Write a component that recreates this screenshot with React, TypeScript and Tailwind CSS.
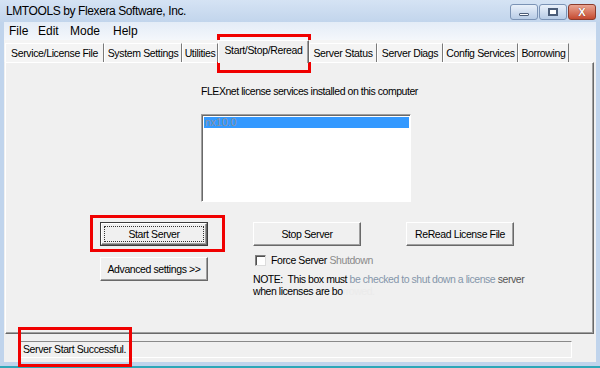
import React from "react";

const TABS = [
  { label: "Service/License File", w: "w-[99px]" },
  { label: "System Settings", w: "w-[78px]" },
  { label: "Utilities", w: "w-[36px]" },
  { label: "Start/Stop/Reread", w: "w-[91px]", active: true },
  { label: "Server Status", w: "w-[68px]" },
  { label: "Server Diags", w: "w-[66px]" },
  { label: "Config Services", w: "w-[75px]" },
  { label: "Borrowing", w: "w-[51px]" },
];

const MENU = [
  { label: "File", w: "w-[29px]" },
  { label: "Edit", w: "w-[32px]" },
  { label: "Mode", w: "w-[43px]" },
  { label: "Help", w: "w-[30px]" },
];

function WinButton({
  label,
  isDefault = false,
  className = "",
}: {
  label: string;
  isDefault?: boolean;
  className?: string;
}) {
  const face = (
    <div className="relative flex h-full w-full items-center justify-center border border-t-white border-l-white border-r-[#696969] border-b-[#696969] bg-[#f0f0f0] shadow-[inset_-1px_-1px_0_#a0a0a0]">
      {isDefault && (
        <div className="absolute inset-[2px] border border-dotted border-[#333]" />
      )}
      <span className="text-[10.5px] leading-[13px] tracking-[-0.4px] text-black">
        {label}
      </span>
    </div>
  );

  if (isDefault) {
    return (
      <div className={`h-[24px] w-[108px] border border-[#3c3c3c] ${className}`}>
        {face}
      </div>
    );
  }
  return <div className={`h-[24px] w-[108px] ${className}`}>{face}</div>;
}

function CaptionButtons() {
  return (
    <div className="mt-[4px] mr-[4px] flex gap-[1px]">
      <div className="flex h-[16px] w-[28px] items-center justify-center rounded-[3px] border border-[#7b93b5] bg-linear-to-b from-[#eaf1fa] to-[#b8cce6]">
        <div className="mt-[4px] h-[3px] w-[10px] rounded-[1px] border border-[#4b5d78] bg-white" />
      </div>
      <div className="flex h-[16px] w-[28px] items-center justify-center rounded-[3px] border border-[#7b93b5] bg-linear-to-b from-[#eaf1fa] to-[#b8cce6]">
        <div className="h-[8px] w-[10px] border-2 border-[#4b5d78] bg-white" />
      </div>
      <div className="flex h-[16px] w-[28px] items-center justify-center rounded-[3px] border border-[#8a3b2c] bg-linear-to-b from-[#e9a593] to-[#c4492f]">
        <span className="text-[11px] leading-none font-bold text-white [text-shadow:0_0_1px_#5a1a0c]">
          X
        </span>
      </div>
    </div>
  );
}

export default function App() {
  return (
    <div className="relative flex h-[368px] w-[600px] flex-col overflow-hidden bg-[#c0d4ec] font-['Liberation_Sans',Arial,sans-serif] text-black">
      {/* title bar */}
      <div className="flex h-[22px] shrink-0 justify-between bg-linear-to-b from-[#d5e3f4] to-[#c2d5ec]">
        <span className="pt-[4px] pl-[6px] text-[12px] leading-[15px] tracking-[-0.4px]">
          LMTOOLS by Flexera Software, Inc.
        </span>
        <CaptionButtons />
      </div>

      <div className="mx-[4px] flex flex-1 flex-col bg-[#f0f0f0]">
        {/* menu */}
        <div className="flex h-[18px] items-center bg-linear-to-b from-[#e4ecf7] to-[#f4f7fb] pl-[5px] text-[12px] leading-[15px]">
          {MENU.map((m) => (
            <span key={m.label} className={m.w}>
              {m.label}
            </span>
          ))}
        </div>

        {/* tabs */}
        <div className="relative z-10 flex h-[22px] items-end bg-[#f4f4f4] pl-[1px]">
          {TABS.map((t) =>
            t.active ? (
              <div
                key={t.label}
                className={`${t.w} -mb-[1px] flex h-[23px] justify-center border-t border-l border-r border-t-white border-l-white border-r-[#696969] bg-[#f0f0f0] pt-[3px] shadow-[inset_-1px_0_0_#a0a0a0]`}
              >
                <span className="text-[10.5px] leading-[13px] tracking-[-0.35px]">
                  {t.label}
                </span>
              </div>
            ) : (
              <div
                key={t.label}
                className={`${t.w} flex h-[19px] justify-center border-t border-l border-r border-t-white border-l-white border-r-[#7a7a7a] pt-[3px]`}
              >
                <span className="text-[10.5px] leading-[13px] tracking-[-0.35px]">
                  {t.label}
                </span>
              </div>
            )
          )}
        </div>

        {/* panel */}
        <div className="ml-[1px] mr-[2px] flex h-[272px] flex-col border border-t-white border-l-white border-r-[#696969] border-b-[#696969] shadow-[inset_-1px_-1px_0_#a0a0a0]">
          <p className="pt-[22px] pl-[195px] text-[10.5px] leading-[13px] tracking-[-0.45px]">
            FLEXnet license services installed on this computer
          </p>

          <div className="mt-[16px] ml-[195px] h-[88px] w-[210px] border border-t-[#a0a0a0] border-l-[#a0a0a0] border-r-white border-b-white bg-white p-[1px] shadow-[inset_1px_1px_0_#696969]">
            <div className="ml-[1px] mt-[1px] h-[11px] bg-[#3399ff] pl-[1px] text-[10.5px] leading-[11px] text-[#8d93a0]">
              nx10.0
            </div>
          </div>

          <div className="mt-[20px] ml-[94px] flex">
            <div className="flex w-[108px] flex-col">
              <WinButton label="Start Server" isDefault />
              <WinButton label="Advanced settings >>" className="mt-[11px]" />
            </div>

            <div className="ml-[45px] flex flex-col">
              <div className="flex gap-[45px]">
                <WinButton label="Stop Server" />
                <WinButton label="ReRead License File" />
              </div>
              <div className="mt-[8px] ml-[2px] flex items-center gap-[5px]">
                <div className="h-[11px] w-[11px] border border-t-[#808080] border-l-[#808080] border-r-[#dcdcdc] border-b-[#dcdcdc] bg-white shadow-[inset_1px_1px_0_#505050]" />
                <span className="text-[10.5px] leading-[13px] tracking-[-0.4px]">
                  Force Server <span className="text-[#8a8a8a]">Shutdown</span>
                </span>
              </div>
              <p className="mt-[6px] text-[10.5px] leading-[12px] tracking-[-0.45px]">
                NOTE:&nbsp; This box must{" "}
                <span className="text-[#8596aa]">
                  be checked to shut down a license
                </span>{" "}
                <span className="text-[#555]">server</span>
                <br />
                when licenses are bo
                <span className="text-[#ebebeb]">rrowed.</span>
              </p>
            </div>
          </div>
        </div>

        {/* status bar */}
        <div className="h-[28px] shrink-0 pt-[7px] pl-[16px]">
          <div className="flex h-[17px] w-[552px] items-center border border-t-[#8a8a8a] border-l-[#8a8a8a] border-r-white border-b-white pl-[2px] text-[10.5px] leading-[13px] tracking-[-0.4px]">
            Server Start Successful.
          </div>
        </div>
      </div>

      <div className="h-[6px] shrink-0 border-b-2 border-b-[#2fa7b8] bg-[#c0d4ec]" />

      {/* red annotation boxes */}
      <div className="absolute top-[34px] left-[217px] h-[39px] w-[94px] border-[3px] border-[#f00000]" />
      <div className="absolute top-[215px] left-[90px] h-[37px] w-[135px] border-[3px] border-[#f00000]" />
      <div className="absolute top-[327px] left-[18px] h-[40px] w-[114px] border-[3px] border-[#f00000]" />
    </div>
  );
}
